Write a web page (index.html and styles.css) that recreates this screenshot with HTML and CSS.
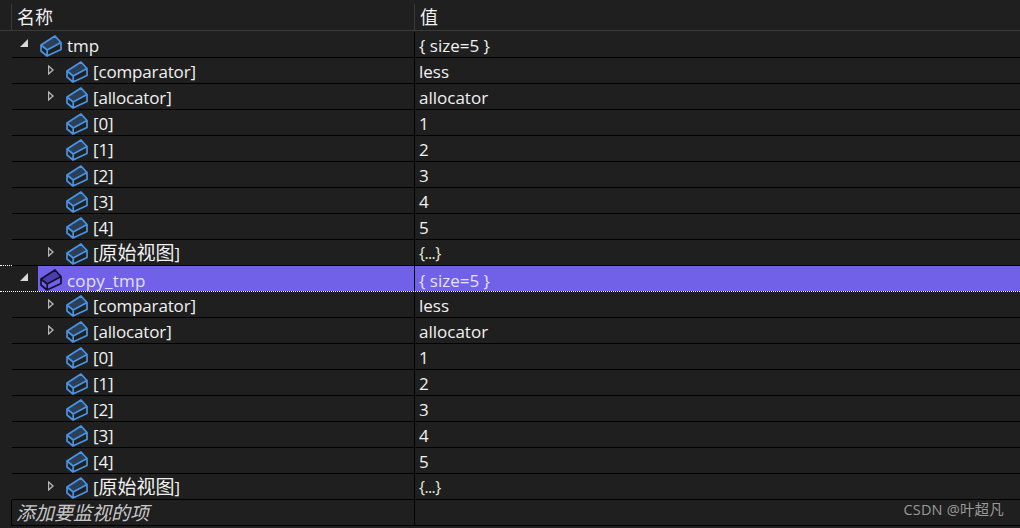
FILE: index.html
```html
<!DOCTYPE html>
<html>
<head>
    <title>监视</title>
    <link rel="stylesheet" href="styles.css">
</head>
<body>
    <svg class="defs" width="0" height="0">
        <symbol id="cube" viewBox="0 0 22 22">
            <path class="cube-side" d="M1 10 7.500 15 21 7.500V14.500L7 21 1 16Z"/>
            <path class="cube-top" d="M1 10 15 1 21 7.500 7.500 15Z"/>
            <path class="cube-line" d="M1 10 15 1 21 7.500V14.500L7 21 1 16ZM1 10 7.200 15 21 7.500M7.200 15V21"/>
        </symbol>
        <symbol id="closed" viewBox="0 0 8 10">
            <path class="arrow-line" d="M.5 1 5 5 .5 9Z"/>
        </symbol>
        <symbol id="open" viewBox="0 0 8 8">
            <path class="arrow-fill" d="M8 0V8H0Z"/>
        </symbol>
    </svg>

    <div class="watch">
        <div class="head">
            <div class="head-name">名称</div>
            <div class="head-value">值</div>
        </div>

        <div class="row">
            <div class="name"><svg class="arrow open"><use href="#open"/></svg><svg class="cube"><use href="#cube"/></svg><span class="label">tmp</span></div>
            <div class="value">{ size=5 }</div>
        </div>
        <div class="row child">
            <div class="name"><svg class="arrow closed"><use href="#closed"/></svg><svg class="cube"><use href="#cube"/></svg><span class="label">[comparator]</span></div>
            <div class="value">less</div>
        </div>
        <div class="row child">
            <div class="name"><svg class="arrow closed"><use href="#closed"/></svg><svg class="cube"><use href="#cube"/></svg><span class="label">[allocator]</span></div>
            <div class="value">allocator</div>
        </div>
        <div class="row child">
            <div class="name"><span class="arrow"></span><svg class="cube"><use href="#cube"/></svg><span class="label">[0]</span></div>
            <div class="value">1</div>
        </div>
        <div class="row child">
            <div class="name"><span class="arrow"></span><svg class="cube"><use href="#cube"/></svg><span class="label">[1]</span></div>
            <div class="value">2</div>
        </div>
        <div class="row child">
            <div class="name"><span class="arrow"></span><svg class="cube"><use href="#cube"/></svg><span class="label">[2]</span></div>
            <div class="value">3</div>
        </div>
        <div class="row child">
            <div class="name"><span class="arrow"></span><svg class="cube"><use href="#cube"/></svg><span class="label">[3]</span></div>
            <div class="value">4</div>
        </div>
        <div class="row child">
            <div class="name"><span class="arrow"></span><svg class="cube"><use href="#cube"/></svg><span class="label">[4]</span></div>
            <div class="value">5</div>
        </div>
        <div class="row child">
            <div class="name"><svg class="arrow closed"><use href="#closed"/></svg><svg class="cube"><use href="#cube"/></svg><span class="label">[<span class="cjk">原始视图</span>]</span></div>
            <div class="value raw">{...}</div>
        </div>

        <div class="row selected">
            <div class="name"><svg class="arrow open"><use href="#open"/></svg><div class="pick"><svg class="cube"><use href="#cube"/></svg><span class="label">copy_tmp</span></div></div>
            <div class="value">{ size=5 }</div>
        </div>
        <div class="row child">
            <div class="name"><svg class="arrow closed"><use href="#closed"/></svg><svg class="cube"><use href="#cube"/></svg><span class="label">[comparator]</span></div>
            <div class="value">less</div>
        </div>
        <div class="row child">
            <div class="name"><svg class="arrow closed"><use href="#closed"/></svg><svg class="cube"><use href="#cube"/></svg><span class="label">[allocator]</span></div>
            <div class="value">allocator</div>
        </div>
        <div class="row child">
            <div class="name"><span class="arrow"></span><svg class="cube"><use href="#cube"/></svg><span class="label">[0]</span></div>
            <div class="value">1</div>
        </div>
        <div class="row child">
            <div class="name"><span class="arrow"></span><svg class="cube"><use href="#cube"/></svg><span class="label">[1]</span></div>
            <div class="value">2</div>
        </div>
        <div class="row child">
            <div class="name"><span class="arrow"></span><svg class="cube"><use href="#cube"/></svg><span class="label">[2]</span></div>
            <div class="value">3</div>
        </div>
        <div class="row child">
            <div class="name"><span class="arrow"></span><svg class="cube"><use href="#cube"/></svg><span class="label">[3]</span></div>
            <div class="value">4</div>
        </div>
        <div class="row child">
            <div class="name"><span class="arrow"></span><svg class="cube"><use href="#cube"/></svg><span class="label">[4]</span></div>
            <div class="value">5</div>
        </div>
        <div class="row child">
            <div class="name"><svg class="arrow closed"><use href="#closed"/></svg><svg class="cube"><use href="#cube"/></svg><span class="label">[<span class="cjk">原始视图</span>]</span></div>
            <div class="value raw">{...}</div>
        </div>

        <div class="row add">
            <div class="name"><span class="label">添加要监视的项</span></div>
            <div class="value"></div>
        </div>
    </div>

    <div class="mark">CSDN @叶超凡</div>
</body>
</html>
```

FILE: styles.css
```css
html, body {
    margin: 0;
    padding: 0;
}

body {
    --cube-side: #1f2020;
    --cube-top: #2c3f58;
    --cube-line: #4a94e4;
    width: 1020px;
    height: 528px;
    overflow: hidden;
    position: relative;
    background: #1f1f1f;
    color: #f1f1f1;
    font-family: "Open Sans", "Noto Sans CJK SC", sans-serif;
    font-size: 17px;
}

.defs {
    position: absolute;
}

.head {
    display: flex;
    height: 31px;
    padding-top: 4px;
    margin-bottom: 1px;
    box-sizing: border-box;
    border-bottom: 1px solid #3a3a3a;
    font-size: 18px;
    line-height: 27px;
}

.head-name {
    width: 403px;
    margin-left: 11px;
    padding-left: 5px;
    box-sizing: border-box;
    border-left: 1px solid #3a3a3a;
}

.head-value {
    flex: 1;
    padding-left: 5px;
    border-left: 1px solid #3a3a3a;
}

.row {
    display: flex;
    height: 26px;
    padding-left: 12px;
    box-sizing: border-box;
    line-height: 27px;
    white-space: nowrap;
}

.name {
    display: flex;
    align-items: center;
    width: 402px;
    padding-left: 8px;
    box-sizing: border-box;
    border-bottom: 1px solid #000;
}

.child .name {
    padding-left: 36px;
    letter-spacing: -.15px;
}

.label {
    margin-top: 2px;
}

.value {
    flex: 1;
    padding-left: 4px;
    box-sizing: border-box;
    border-left: 1px solid #000;
    border-bottom: 1px solid #000;
}

.raw {
    font-size: 16px;
    letter-spacing: -.6px;
    color: #e8f0d8;
}

.cjk {
    font-size: 19px;
    letter-spacing: 0;
}

.arrow {
    flex: none;
    width: 8px;
    height: 10px;
    margin-right: 10px;
}

.arrow.open {
    height: 8px;
    margin: 0 12px 4px 0;
}

.arrow.closed {
    margin-bottom: 1px;
}

.arrow-line {
    fill: #1f1f1f;
    stroke: #b4b4b4;
    stroke-width: 1.400;
}

.arrow-fill {
    fill: #d8d8d8;
}

.cube {
    flex: none;
    width: 22px;
    height: 22px;
    margin: 2px 5px 0 0;
}

.cube-side {
    fill: var(--cube-side);
}

.cube-top {
    fill: var(--cube-top);
}

.cube-line {
    fill: none;
    stroke: var(--cube-line);
    stroke-width: 1.700;
    stroke-linejoin: round;
}

.selected {
    --cube-side: #7160e8;
    --cube-top: #4a3eb0;
    --cube-line: #14102e;
    height: 27px;
    margin-top: -1px;
    padding-left: 0;
    border-top: 1px dotted #fff;
    border-bottom: 1px dotted #fff;
    line-height: 29px;
    color: #e4e0ff;
}

.selected .name {
    width: 414px;
    padding-left: 20px;
    border-bottom: 0;
}

.selected .arrow {
    margin-right: 10px;
}

.selected .label {
    margin-top: 3px;
    letter-spacing: .2px;
}

.selected .value {
    background: #7160e8;
    border-bottom: 0;
}

.pick {
    flex: 1;
    display: flex;
    align-items: center;
    align-self: stretch;
    padding-left: 2px;
    background: #7160e8;
}

.add .name {
    width: 403px;
    margin-left: -1px;
    padding-left: 4px;
    border-left: 1px solid #000;
    font-size: 19px;
    font-style: italic;
    color: #c8c8c8;
}

.mark {
    position: absolute;
    right: 16px;
    bottom: 9px;
    font-size: 14.500px;
    letter-spacing: .2px;
    color: #9a9a9a;
}
```
